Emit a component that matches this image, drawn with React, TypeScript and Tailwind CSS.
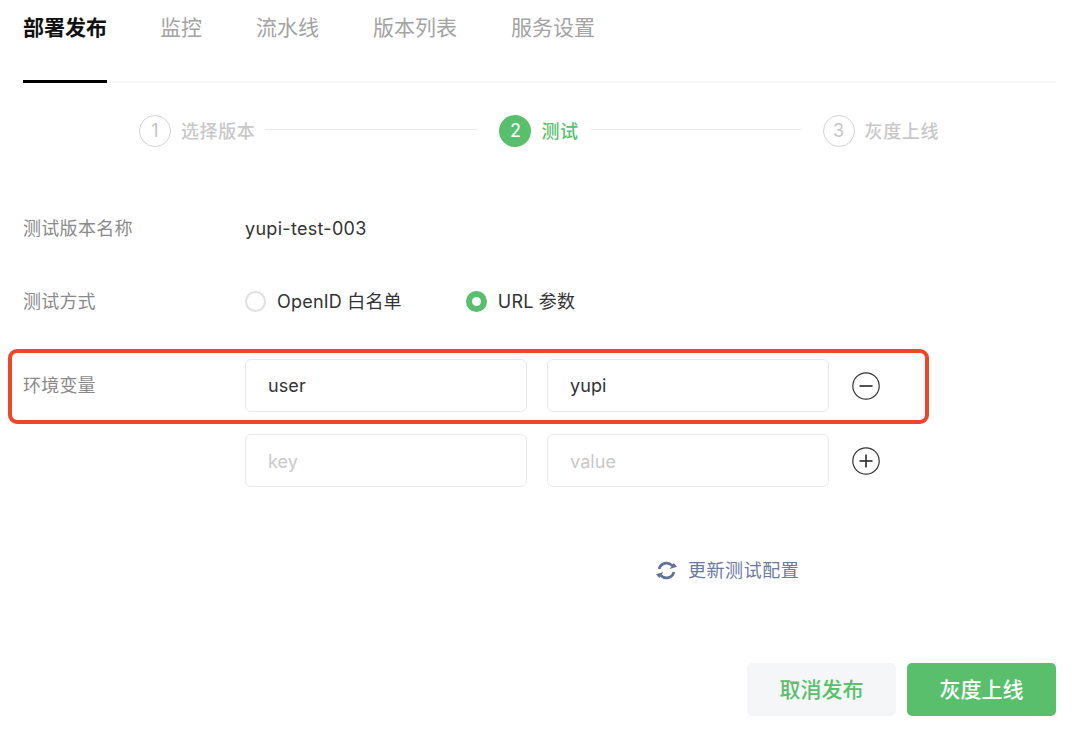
import React from "react";

function Step({ n, label, state }: { n: number; label: string; state: "done" | "active" | "todo" }) {
  const active = state === "active";
  return (
    <div className="flex items-center shrink-0">
      <div
        className={
          active
            ? "w-8 h-8 rounded-full bg-[#59bf6d] text-white flex items-center justify-center text-[18px] leading-none"
            : "w-8 h-8 rounded-full border border-[#d4d4d4] text-[#c4c4c4] flex items-center justify-center text-[18px] leading-none"
        }
      >
        {n}
      </div>
      <span
        className={
          active
            ? "ml-[10px] text-[18px] tracking-[0.6px] font-medium text-[#59bf6d]"
            : "ml-[10px] text-[18px] tracking-[0.6px] font-medium text-[#c8c8c8]"
        }
      >
        {label}
      </span>
    </div>
  );
}

function Field({ text, placeholder }: { text?: string; placeholder?: string }) {
  return (
    <div className="w-[282px] h-[53px] rounded-[6px] border border-[#e9e9e9] bg-white flex items-center pl-[22px] text-[18px] tracking-[0.1px]">
      {text ? <span className="text-[#333333]">{text}</span> : <span className="text-[#c9c9c9] translate-y-[1px]">{placeholder}</span>}
    </div>
  );
}

function RoundIcon({ plus }: { plus?: boolean }) {
  return (
    <svg width="28" height="28" viewBox="0 0 28 28" fill="none" className="ml-[23px] shrink-0">
      <circle cx="14" cy="14" r="13.2" stroke="#333333" strokeWidth="1.2" />
      <path d="M7.5 14H20.5" stroke="#333333" strokeWidth="1.7" />
      {plus && <path d="M14 7.5V20.5" stroke="#333333" strokeWidth="1.7" />}
    </svg>
  );
}

export default function App() {
  return (
    <div
      className="w-[1080px] h-[734px] bg-white overflow-hidden pl-[23px] pr-[24px] flex flex-col"
      style={{ fontFamily: 'Inter, "Noto Sans CJK SC", sans-serif' }}
    >
      <div className="h-[83px] shrink-0 flex gap-[54px] border-b-2 border-[#f6f6f6] text-[21px] text-[#a3a3a3]">
        <div className="h-[83px] pt-[12px] leading-[32px] border-b-[3px] border-black text-[#111111] font-bold -mr-[1px] w-[84px]">部署发布</div>
        <div className="pt-[12px] leading-[32px]">监控</div>
        <div className="pt-[12px] leading-[32px]">流水线</div>
        <div className="pt-[12px] leading-[32px]">版本列表</div>
        <div className="pt-[12px] leading-[32px]">服务设置</div>
      </div>

      <div className="mt-[32px] h-8 shrink-0 ml-[116px] w-[800px] flex items-center">
        <Step n={1} label="选择版本" state="done" />
        <div className="ml-[10px] w-[212px] h-px bg-[#e9e9e9] -translate-y-[2px]" />
        <div className="ml-[22px]"><Step n={2} label="测试" state="active" /></div>
        <div className="ml-[11px] w-[211px] h-px bg-[#e9e9e9] -translate-y-[2px]" />
        <div className="ml-[22px]"><Step n={3} label="灰度上线" state="todo" /></div>
      </div>

      <div className="mt-[65px] h-8 shrink-0 flex items-center text-[18px] tracking-[0.3px]">
        <span className="w-[222px] text-[#8a8a8a]">测试版本名称</span>
        <span className="text-[#333333]">yupi-test-003</span>
      </div>

      <div className="mt-[41px] h-8 shrink-0 flex items-center text-[18px] tracking-[0.2px]">
        <span className="w-[222px] text-[#8a8a8a]">测试方式</span>
        <span className="w-[21px] h-[21px] rounded-full border-2 border-[#e0e0e0]" />
        <span className="ml-[11px] text-[#333333]">OpenID 白名单</span>
        <span className="ml-[64px] w-[21px] h-[21px] rounded-full border-[6px] border-[#59bf6d] bg-white" />
        <span className="ml-[11px] text-[#333333]">URL 参数</span>
      </div>

      <div className="relative mt-[42px] h-[53px] shrink-0 flex items-center text-[18px]">
        <span className="w-[222px] text-[#8a8a8a] tracking-[0.2px]">环境变量</span>
        <Field text="user" />
        <div className="ml-[20px]"><Field text="yupi" /></div>
        <RoundIcon />
        <div className="absolute -left-[15px] -top-[10px] w-[921px] h-[75px] rounded-[9px] border-[4px] border-[#ef452b]" />
      </div>

      <div className="mt-[22px] h-[53px] shrink-0 flex items-center">
        <div className="w-[222px]" />
        <Field placeholder="key" />
        <div className="ml-[20px]"><Field placeholder="value" /></div>
        <RoundIcon plus />
      </div>

      <div className="mt-[67px] h-8 shrink-0 flex items-center ml-[633px] text-[18px] text-[#6b7a9f]">
        <svg width="21" height="21" viewBox="0 0 20 20" fill="none">
          <path d="M3 8.6A7.2 7.2 0 0 1 15.4 5.4" stroke="#5f7099" strokeWidth="2.6" />
          <path d="M17 11.4A7.2 7.2 0 0 1 4.6 14.6" stroke="#5f7099" strokeWidth="2.6" />
          <path d="M20 6.4L13 8.6L16.8 2.8Z" fill="#5f7099" />
          <path d="M0 13.6L7 11.4L3.2 17.2Z" fill="#5f7099" />
        </svg>
        <span className="ml-[11px] tracking-[0.55px]">更新测试配置</span>
      </div>

      <div className="mt-[77px] flex justify-end gap-[11px] text-[21px] font-medium">
        <div className="w-[149px] h-[53px] rounded-[5px] bg-[#f5f6f8] text-[#59bf6d] flex items-center justify-center">取消发布</div>
        <div className="w-[149px] h-[53px] rounded-[5px] bg-[#59bf6d] text-white flex items-center justify-center">灰度上线</div>
      </div>
    </div>
  );
}
